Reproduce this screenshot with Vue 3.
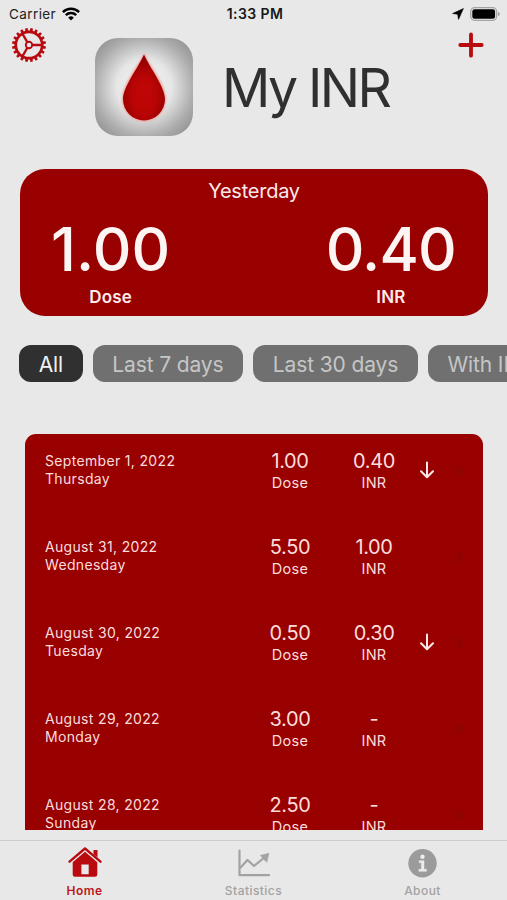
<script setup>
const filters = ['All', 'Last 7 days', 'Last 30 days', 'With INR']

const entries = [
  { date: 'September 1, 2022', day: 'Thursday', dose: '1.00', inr: '0.40', down: true },
  { date: 'August 31, 2022', day: 'Wednesday', dose: '5.50', inr: '1.00', down: false },
  { date: 'August 30, 2022', day: 'Tuesday', dose: '0.50', inr: '0.30', down: true },
  { date: 'August 29, 2022', day: 'Monday', dose: '3.00', inr: '-', down: false },
  { date: 'August 28, 2022', day: 'Sunday', dose: '2.50', inr: '-', down: false },
]

const teeth = Array.from({ length: 20 }, (_, i) => i * 18 + 9)
</script>

<template>
  <div class="screen">
    <div class="status">
      <div class="carrier">
        <span>Carrier</span>
        <svg width="18" height="14" viewBox="0 0 18 14" fill="none" stroke="#000" stroke-width="2.4">
          <path d="M0.9 5.1a11.6 11.6 0 0 1 16.2 0" />
          <path d="M3.8 8.2a7.4 7.4 0 0 1 10.4 0" />
          <path d="M9 13.6l-2.8-2.9a4 4 0 0 1 5.6 0z" fill="#000" stroke="none" />
        </svg>
      </div>
      <span class="clock">1:33 PM</span>
      <div class="power">
        <svg width="12" height="12" viewBox="0 0 12 12"><path d="M11.4 0.6L0.6 5.500l5.1 0.8 0.8 5.1z" fill="#000" stroke="#000" stroke-width="0.600" stroke-linejoin="round" /></svg>
        <svg width="31" height="14" viewBox="0 0 31 14">
          <rect x="0.7" y="0.7" width="26" height="12.6" rx="4" fill="none" stroke="#a3a3a3" stroke-width="1.3" />
          <rect x="2.3" y="2.3" width="22.8" height="9.4" rx="2.3" fill="#000" />
          <path d="M28 4.8v4.4q1.9-.7 1.9-2.2t-1.9-2.2z" fill="#a3a3a3" />
        </svg>
      </div>
    </div>

    <header class="header">
      <svg class="gear" width="36" height="36" viewBox="-18 -18 36 36" fill="none" stroke="#b80a0f">
        <circle r="13.2" stroke-width="2.7" />
        <circle r="3.2" stroke-width="1.9" />
        <path d="M3.5 0H13M-1.8 3L-6.6 11.4M-1.8-3L-6.6-11.4" stroke-width="2.3" />
        <path v-for="a in teeth" :key="a" d="M-1.6-13.6L-1.2-17H1.2L1.6-13.6z" fill="#b80a0f" stroke="none" :transform="`rotate(${a})`" />
      </svg>
      <div class="brand">
        <svg width="98" height="98" viewBox="0 0 98 98">
          <defs>
            <radialGradient id="tile" cx="50%" cy="50%" r="67%">
              <stop offset="0" stop-color="#f4f4f4" />
              <stop offset="0.42" stop-color="#e6e6e6" />
              <stop offset="0.75" stop-color="#adadad" />
              <stop offset="1" stop-color="#8c8c8c" />
            </radialGradient>
            <radialGradient id="blood" cx="50%" cy="62%" r="55%">
              <stop offset="0" stop-color="#c00606" />
              <stop offset="0.5" stop-color="#ba0505" />
              <stop offset="1" stop-color="#960000" />
            </radialGradient>
            <filter id="glow" x="-20%" y="-20%" width="140%" height="140%"><feGaussianBlur stdDeviation="1" /></filter>
          </defs>
          <rect width="98" height="98" rx="23" fill="url(#tile)" />
          <path d="M49 16C45 26 27.500 46 27.500 61A21.500 22 0 0 0 70.500 61C70.500 46 53 26 49 16z" fill="#f0a09a" stroke="#f0a09a" filter="url(#glow)" />
          <path d="M49 16.500C43 30 28 49 28 61A21 21.500 0 0 0 70 61C70 49 55 30 49 16.500z" fill="url(#blood)" />
        </svg>
        <h1 class="title">My INR</h1>
      </div>
      <svg class="plus" width="26" height="26" viewBox="0 0 26 26" stroke="#b80a0f" stroke-width="3.8" stroke-linecap="round">
        <path d="M13 2.300V23.700M2.300 13H23.700" />
      </svg>
    </header>

    <section class="summary">
      <div class="when">Yesterday</div>
      <div class="figures">
        <div class="figure dose"><strong>1.00</strong><span>Dose</span></div>
        <div class="figure inr"><strong>0.40</strong><span>INR</span></div>
      </div>
    </section>

    <nav class="filters">
      <div v-for="(f, i) in filters" :key="f" class="chip" :class="{ active: i === 0 }"><span>{{ f }}</span></div>
    </nav>

    <main class="list">
      <div v-for="e in entries" :key="e.date" class="row">
        <div class="date"><span>{{ e.date }}</span><span>{{ e.day }}</span></div>
        <div class="cell"><b>{{ e.dose }}</b><span>Dose</span></div>
        <div class="cell"><b>{{ e.inr }}</b><span>INR</span></div>
        <div class="trend">
          <svg v-if="e.down" width="16" height="18" viewBox="0 0 16 18" fill="none" stroke="#fbeaea" stroke-width="2" stroke-linecap="round" stroke-linejoin="round">
            <path d="M8 1.500V16M2 10.300L8 16.200L14 10.300" />
          </svg>
        </div>
        <svg class="chevron" width="8" height="12" viewBox="0 0 8 12" fill="none" stroke="#860606" stroke-width="1.8"><path d="M1.500 1L6.500 6L1.500 11" /></svg>
      </div>
    </main>

    <footer class="tabs">
      <div class="tab current">
        <svg width="34" height="32" viewBox="0 0 34 32" fill="#b80a0f">
          <path d="M1.500 15.700L17 2.500L32.500 15.700" fill="none" stroke="#b80a0f" stroke-width="2.300" stroke-linecap="round" stroke-linejoin="round" />
          <path d="M25.500 4H29.500V11.500L25.500 8z" />
          <path fill-rule="evenodd" d="M17 5.800L29.300 16.300V28.500Q29.300 30.800 27 30.800H7Q4.700 30.800 4.700 28.500V16.300zM13.400 18.500V28.300H20.700V18.500z" />
        </svg>
        <span>Home</span>
      </div>
      <div class="tab">
        <svg width="34" height="32" viewBox="0 0 34 32" fill="none" stroke="#a2a2a2" stroke-width="2.200" stroke-linecap="round" stroke-linejoin="round">
          <path d="M2.500 4.700V29.200H32" />
          <path d="M3.500 21.500L10.500 14L17 20L27.500 11.500" />
          <path d="M31.500 7.500L23.500 9.500L29.500 16z" fill="#a2a2a2" stroke-width="0.800" />
        </svg>
        <span>Statistics</span>
      </div>
      <div class="tab">
        <svg width="34" height="32" viewBox="0 0 34 32">
          <circle cx="16.500" cy="17.300" r="14.200" fill="#9b9b9b" />
          <circle cx="16.500" cy="10.700" r="2.200" fill="#ececec" />
          <path d="M13.200 14.700H18V23.300H20.500V25.300H12.800V23.300H15.400V16.700H13.200z" fill="#ececec" stroke="#ececec" stroke-width="0.500" />
        </svg>
        <span>About</span>
      </div>
    </footer>
  </div>
</template>

<style>
body { margin: 0; background: #e8e8e8; }
</style>

<style scoped>
.screen {
  width: 507px;
  height: 900px;
  display: flex;
  flex-direction: column;
  overflow: hidden;
  background: #e8e8e8;
  color: #303030;
  font-family: Inter, "Liberation Sans", sans-serif;
  white-space: nowrap;
}
.status {
  height: 27px;
  flex: none;
  display: grid;
  grid-template-columns: 1fr auto 1fr;
  align-items: center;
  padding: 0 6px 0 9px;
  box-sizing: border-box;
  font-size: 13.5px;
  color: #222;
}
.carrier { display: flex; align-items: center; gap: 6px; letter-spacing: 0.4px; }
.clock { font-weight: 600; font-size: 14px; letter-spacing: 0.4px; color: #181818; }
.power { display: flex; justify-content: flex-end; align-items: center; gap: 6px; }
.header {
  height: 142px;
  flex: none;
  display: flex;
  align-items: flex-start;
  box-sizing: border-box;
  padding: 0 23px 0 11px;
}
.gear { flex: none; }
.brand { display: flex; flex: 1; gap: 29px; padding: 11px 0 0 48px; }
.title { margin: 0; font-weight: 400; font-size: 53.5px; line-height: 99px; letter-spacing: -2.6px; }
.plus { margin-top: 5px; flex: none; }
.summary {
  width: 468px;
  height: 147px;
  flex: none;
  margin-left: 20px;
  box-sizing: border-box;
  border-radius: 25px;
  background: #990000;
  color: #fbeaea;
  padding-top: 9px;
}
.when { text-align: center; font-size: 20px; line-height: 26px; letter-spacing: -0.25px; }
.figures { display: flex; justify-content: space-between; padding: 4px 32px 0 31px; }
.figure { display: flex; flex-direction: column; align-items: center; }
.figure strong { font-weight: 500; font-size: 60px; line-height: 82px; color: #fdf4f4; }
.figure span { margin-top: -4px; font-weight: 600; font-size: 17px; line-height: 22px; letter-spacing: 0.2px; }
.figure.dose strong { letter-spacing: 0.1px; }
.figure.inr strong { letter-spacing: -0.8px; }
.filters { display: flex; flex: none; gap: 9.7px; margin: 29px 0 52px 19px; }
.chip {
  height: 37px;
  flex: none;
  box-sizing: border-box;
  border-radius: 12px;
  padding: 1px 20px 0 19.7px;
  background: #707070;
  color: #c6c6c6;
  font-size: 21px;
  line-height: 37px;
  letter-spacing: -0.13px;
}
.chip.active { background: #303030; color: #f2f2f2; }
.list {
  width: 458px;
  height: 396px;
  flex: none;
  margin-left: 25px;
  overflow: hidden;
  border-radius: 11px 11px 0 0;
  background: #990000;
  color: #fbdddd;
}
.row {
  height: 86px;
  box-sizing: border-box;
  display: grid;
  grid-template-columns: 203px 84px 84px 22px 1fr;
  padding: 16px 20px 0;
}
.date { display: flex; flex-direction: column; padding-top: 2px; font-size: 14px; line-height: 17.6px; letter-spacing: 0.33px; }
.cell { display: flex; flex-direction: column; align-items: center; font-size: 14.5px; letter-spacing: 0.25px; }
.cell b { font-weight: 400; font-size: 20px; line-height: 22px; letter-spacing: -0.4px; }
.cell span { line-height: 21px; }
.trend { padding-top: 11px; display: flex; justify-content: center; }
.chevron { margin: 15px 0 0 17px; }
.tabs {
  height: 60px;
  flex: none;
  margin-top: 10px;
  box-sizing: border-box;
  border-top: 1px solid #cdcdcd;
  display: grid;
  grid-template-columns: repeat(3, 1fr);
}
.tab { display: flex; flex-direction: column; align-items: center; padding-top: 5px; font-size: 12px; line-height: 15px; font-weight: 500; color: #a2a2a2; letter-spacing: 0.45px; }
.tab span { margin-top: 5px; }
.tab.current { color: #bb1820; font-weight: 600; }
</style>
